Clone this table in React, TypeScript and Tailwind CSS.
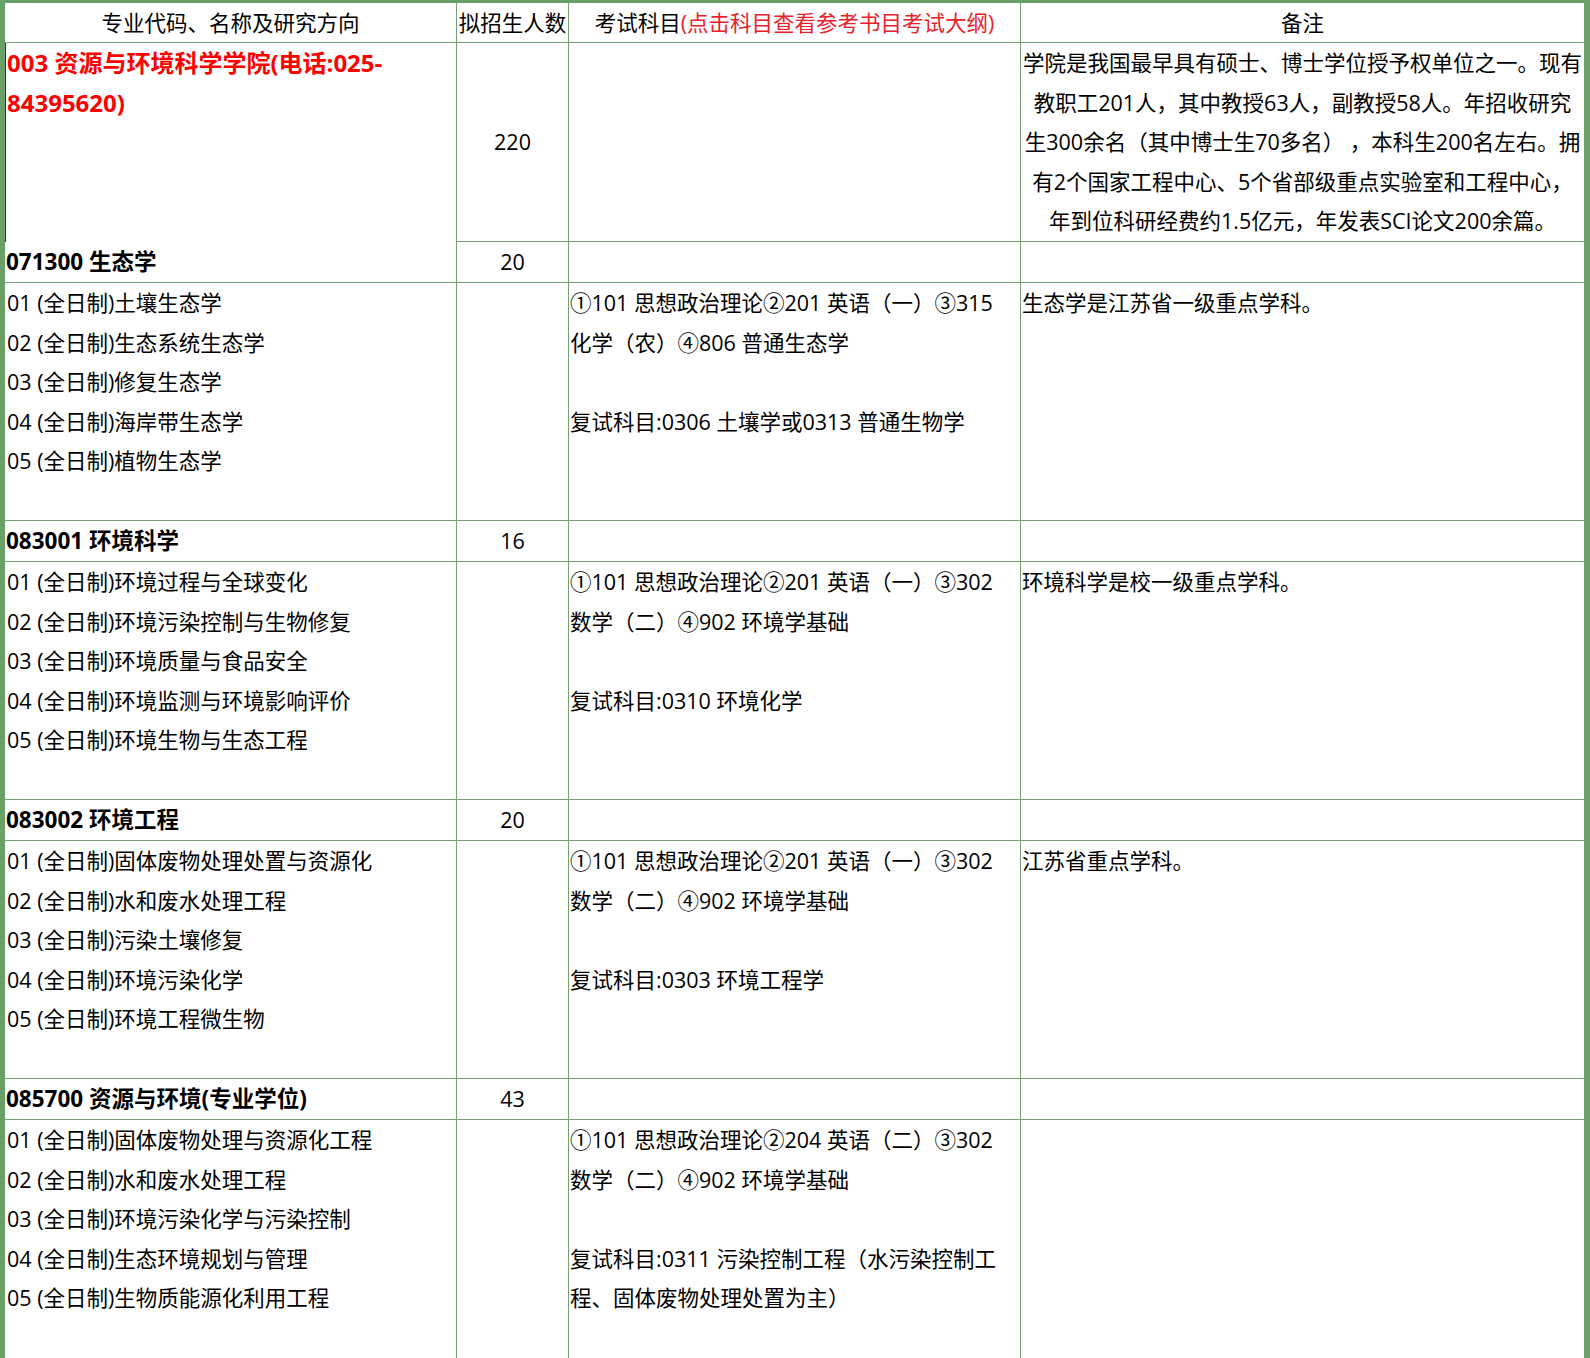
import React from 'react';

type Group = {
  code: string;
  num: string;
  dirs: string[];
  exam: string[];
  note: string;
};

const groups: Group[] = [
  {
    code: '071300 生态学',
    num: '20',
    dirs: [
      '01 (全日制)土壤生态学',
      '02 (全日制)生态系统生态学',
      '03 (全日制)修复生态学',
      '04 (全日制)海岸带生态学',
      '05 (全日制)植物生态学',
    ],
    exam: [
      '①101 思想政治理论②201 英语（一）③315',
      '化学（农）④806 普通生态学',
      '',
      '复试科目:0306 土壤学或0313 普通生物学',
    ],
    note: '生态学是江苏省一级重点学科。',
  },
  {
    code: '083001 环境科学',
    num: '16',
    dirs: [
      '01 (全日制)环境过程与全球变化',
      '02 (全日制)环境污染控制与生物修复',
      '03 (全日制)环境质量与食品安全',
      '04 (全日制)环境监测与环境影响评价',
      '05 (全日制)环境生物与生态工程',
    ],
    exam: [
      '①101 思想政治理论②201 英语（一）③302',
      '数学（二）④902 环境学基础',
      '',
      '复试科目:0310 环境化学',
    ],
    note: '环境科学是校一级重点学科。',
  },
  {
    code: '083002 环境工程',
    num: '20',
    dirs: [
      '01 (全日制)固体废物处理处置与资源化',
      '02 (全日制)水和废水处理工程',
      '03 (全日制)污染土壤修复',
      '04 (全日制)环境污染化学',
      '05 (全日制)环境工程微生物',
    ],
    exam: [
      '①101 思想政治理论②201 英语（一）③302',
      '数学（二）④902 环境学基础',
      '',
      '复试科目:0303 环境工程学',
    ],
    note: '江苏省重点学科。',
  },
  {
    code: '085700 资源与环境(专业学位)',
    num: '43',
    dirs: [
      '01 (全日制)固体废物处理与资源化工程',
      '02 (全日制)水和废水处理工程',
      '03 (全日制)环境污染化学与污染控制',
      '04 (全日制)生态环境规划与管理',
      '05 (全日制)生物质能源化利用工程',
    ],
    exam: [
      '①101 思想政治理论②204 英语（二）③302',
      '数学（二）④902 环境学基础',
      '',
      '复试科目:0311 污染控制工程（水污染控制工',
      '程、固体废物处理处置为主）',
    ],
    note: '',
  },
];

const intro = [
  '学院是我国最早具有硕士、博士学位授予权单位之一。现有',
  '教职工201人，其中教授63人，副教授58人。年招收研究',
  '生300余名（其中博士生70多名） ，本科生200名左右。拥',
  '有2个国家工程中心、5个省部级重点实验室和工程中心，',
  '年到位科研经费约1.5亿元，年发表SCI论文200余篇。',
];

const line = 'border-[#74a074]';
const cell = `border-b border-r ${line} overflow-hidden`;
const last = `border-b ${line} overflow-hidden`;

function Lines({ items }: { items: string[] }) {
  return (
    <>
      {items.map((t, i) => (
        <div key={i} className="h-[39.5px] whitespace-nowrap">
          {t}
        </div>
      ))}
    </>
  );
}

export default function App() {
  return (
    <div
      className="w-[1590px] h-[1358px] overflow-hidden bg-white border-t-[3px] border-l-[5px] border-r-[6px] border-b-0 border-[#68a068] text-[21.5px] leading-[39.5px] text-black"
      style={{ fontFamily: '"Open Sans", "Noto Sans CJK SC", sans-serif' }}
    >
      <div className="grid grid-cols-[452px_112px_452px_563px] grid-rows-[40px_199px_41px_238px_41px_238px_41px_238px_41px_320px]">
        {/* 表头 */}
        <div className={`${cell} flex items-center justify-center`}>专业代码、名称及研究方向</div>
        <div className={`${cell} flex items-center justify-center whitespace-nowrap`}>拟招生人数</div>
        <div className={`${cell} flex items-center justify-center whitespace-nowrap`}>
          考试科目<span className="text-[#e8212b]">(点击科目查看参考书目考试大纲)</span>
        </div>
        <div className={`${last} flex items-center justify-center`}>备注</div>

        {/* 学院 */}
        <div className={`border-r border-l border-l-[#1f2f7a] ${line} pl-[1px] text-[24px] font-bold text-[#ff0000]`}>
          <Lines items={['003 资源与环境科学学院(电话:025-', '84395620)']} />
        </div>
        <div className={`${cell} flex items-center justify-center`}>220</div>
        <div className={cell}></div>
        <div className={`${last} text-center`}>
          <Lines items={intro} />
        </div>

        {groups.map((g) => (
          <React.Fragment key={g.code}>
            <div className={`${cell} flex items-center pl-[1px] text-[22.5px] font-bold`}>{g.code}</div>
            <div className={`${cell} flex items-center justify-center`}>{g.num}</div>
            <div className={cell}></div>
            <div className={last}></div>

            <div className={`${cell} pl-[2px]`}>
              <Lines items={g.dirs} />
            </div>
            <div className={cell}></div>
            <div className={`${cell} pl-[1px]`}>
              <Lines items={g.exam} />
            </div>
            <div className={`${last} pl-[1px]`}>
              {g.note && <Lines items={[g.note]} />}
            </div>
          </React.Fragment>
        ))}
      </div>
    </div>
  );
}
